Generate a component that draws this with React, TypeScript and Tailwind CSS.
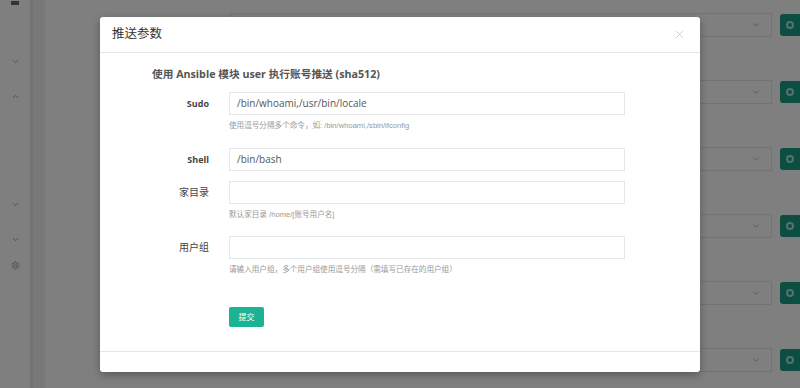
import React from "react";
import { ChevronDown, ChevronUp, Settings, X } from "lucide-react";

const font = { fontFamily: '"Open Sans", "Noto Sans CJK SC", sans-serif' };
const helpFont = { fontFamily: '"Liberation Sans", "Noto Sans CJK SC", sans-serif' };

// Background page rows (dimmed behind modal)
const rows = [0, 1, 2, 3, 4, 5];
const sideIcons = [
  { y: "mt-[52px]", up: false },
  { y: "mt-[26px]", up: true },
  { y: "mt-[99px]", up: false },
  { y: "mt-[26px]", up: false },
];

const fields = [
  { label: "Sudo", bold: true, value: "/bin/whoami,/usr/bin/locale", help: "使用逗号分隔多个命令，如: /bin/whoami,/sbin/ifconfig", gap: "mt-[11px]" },
  { label: "Shell", bold: true, value: "/bin/bash", help: "", gap: "mt-[17px]" },
  { label: "家目录", bold: false, value: "", help: "默认家目录 /home/[账号用户名]", gap: "mt-[10px]" },
  { label: "用户组", bold: false, value: "", help: "请输入用户组，多个用户组使用逗号分隔（需填写已存在的用户组）", gap: "mt-[16px]" },
];

export default function App() {
  return (
    <div className="relative w-[800px] h-[388px] overflow-hidden bg-white" style={font}>
      {/* Page behind the modal */}
      <div className="flex h-full">
        <div className="w-[30px] shrink-0 flex flex-col items-center text-[#888]">
          <div className="mt-[1px] w-[8px] h-[4px] bg-[#666]" />
          {sideIcons.map((s, i) => (
            <div key={i} className={s.y}>
              {s.up ? <ChevronUp size={9} strokeWidth={2} /> : <ChevronDown size={9} strokeWidth={2} />}
            </div>
          ))}
          <div className="mt-[17px]">
            <Settings size={9} strokeWidth={2} />
          </div>
        </div>
        <div className="w-[15px] shrink-0 bg-[#f0f0f0] border-l-[3px] border-[#e6e6e6]" />
        <div className="flex-1 min-w-0 flex flex-col gap-[43px] pt-[13px]">
          {rows.map((r) => (
            <div key={r} className="flex items-center h-[24px]">
              <div className="shrink-0 ml-[185px] w-[542px] h-[24px] border border-[#e5e6e7] flex items-center justify-end pr-[10px] text-[#aaa]">
                <ChevronDown size={10} />
              </div>
              <div className="shrink-0 ml-[8px] w-[30px] h-[22px] bg-[#189f84] rounded-[3px] flex items-center pl-[6px]">
                <div className="w-[8px] h-[8px] rounded-full border-2 border-[#a6e6d8]" />
              </div>
            </div>
          ))}
        </div>
      </div>

      {/* Backdrop */}
      <div className="absolute inset-0 bg-black/50" />

      {/* Modal */}
      <div className="absolute left-[100px] top-[17px] w-[600px] h-[355px] bg-white rounded-[3px] shadow-[0_3px_9px_rgba(0,0,0,0.3)] flex flex-col">
        <div className="h-[36px] flex items-center justify-between px-[12px] border-b border-[#e5e5e5]">
          <span className="text-[12.5px] text-[#333]">推送参数</span>
          <X size={13} className="text-[#c4c4c4] mr-[2px]" strokeWidth={1.5} />
        </div>

        <div className="flex-1 flex flex-col pl-[30px]">
          <div className="mt-[14px] ml-[22px] h-[14px] leading-[14px] text-[10.7px] font-bold text-[#555]">
            使用 Ansible 模块 user 执行账号推送 (sha512)
          </div>
          {fields.map((f) => (
            <div key={f.label} className={`${f.gap} flex`}>
              <div className={`w-[79px] h-[23px] flex items-center justify-end text-[#444] ${f.bold ? "text-[9px] font-bold" : "text-[10px]"}`}>
                {f.label}
              </div>
              <div className="ml-[20px] w-[396px] flex flex-col">
                <div className="h-[23px] border border-[#e5e6e7] flex items-center px-[7px] text-[10px] text-[#555]">
                  {f.value}
                </div>
                {f.help && (
                  <div className="mt-[6px] h-[10px] leading-[10px] text-[7.6px] text-[#999]" style={helpFont}>
                    {f.help}
                  </div>
                )}
              </div>
            </div>
          ))}
          <div className="mt-[32px] ml-[99px]">
            <div className="w-[35px] h-[20px] bg-[#1ab394] rounded-[2px] flex items-center justify-center text-[8px] text-white">
              提交
            </div>
          </div>
        </div>

        <div className="h-[21px] border-t border-[#e5e5e5]" />
      </div>
    </div>
  );
}
